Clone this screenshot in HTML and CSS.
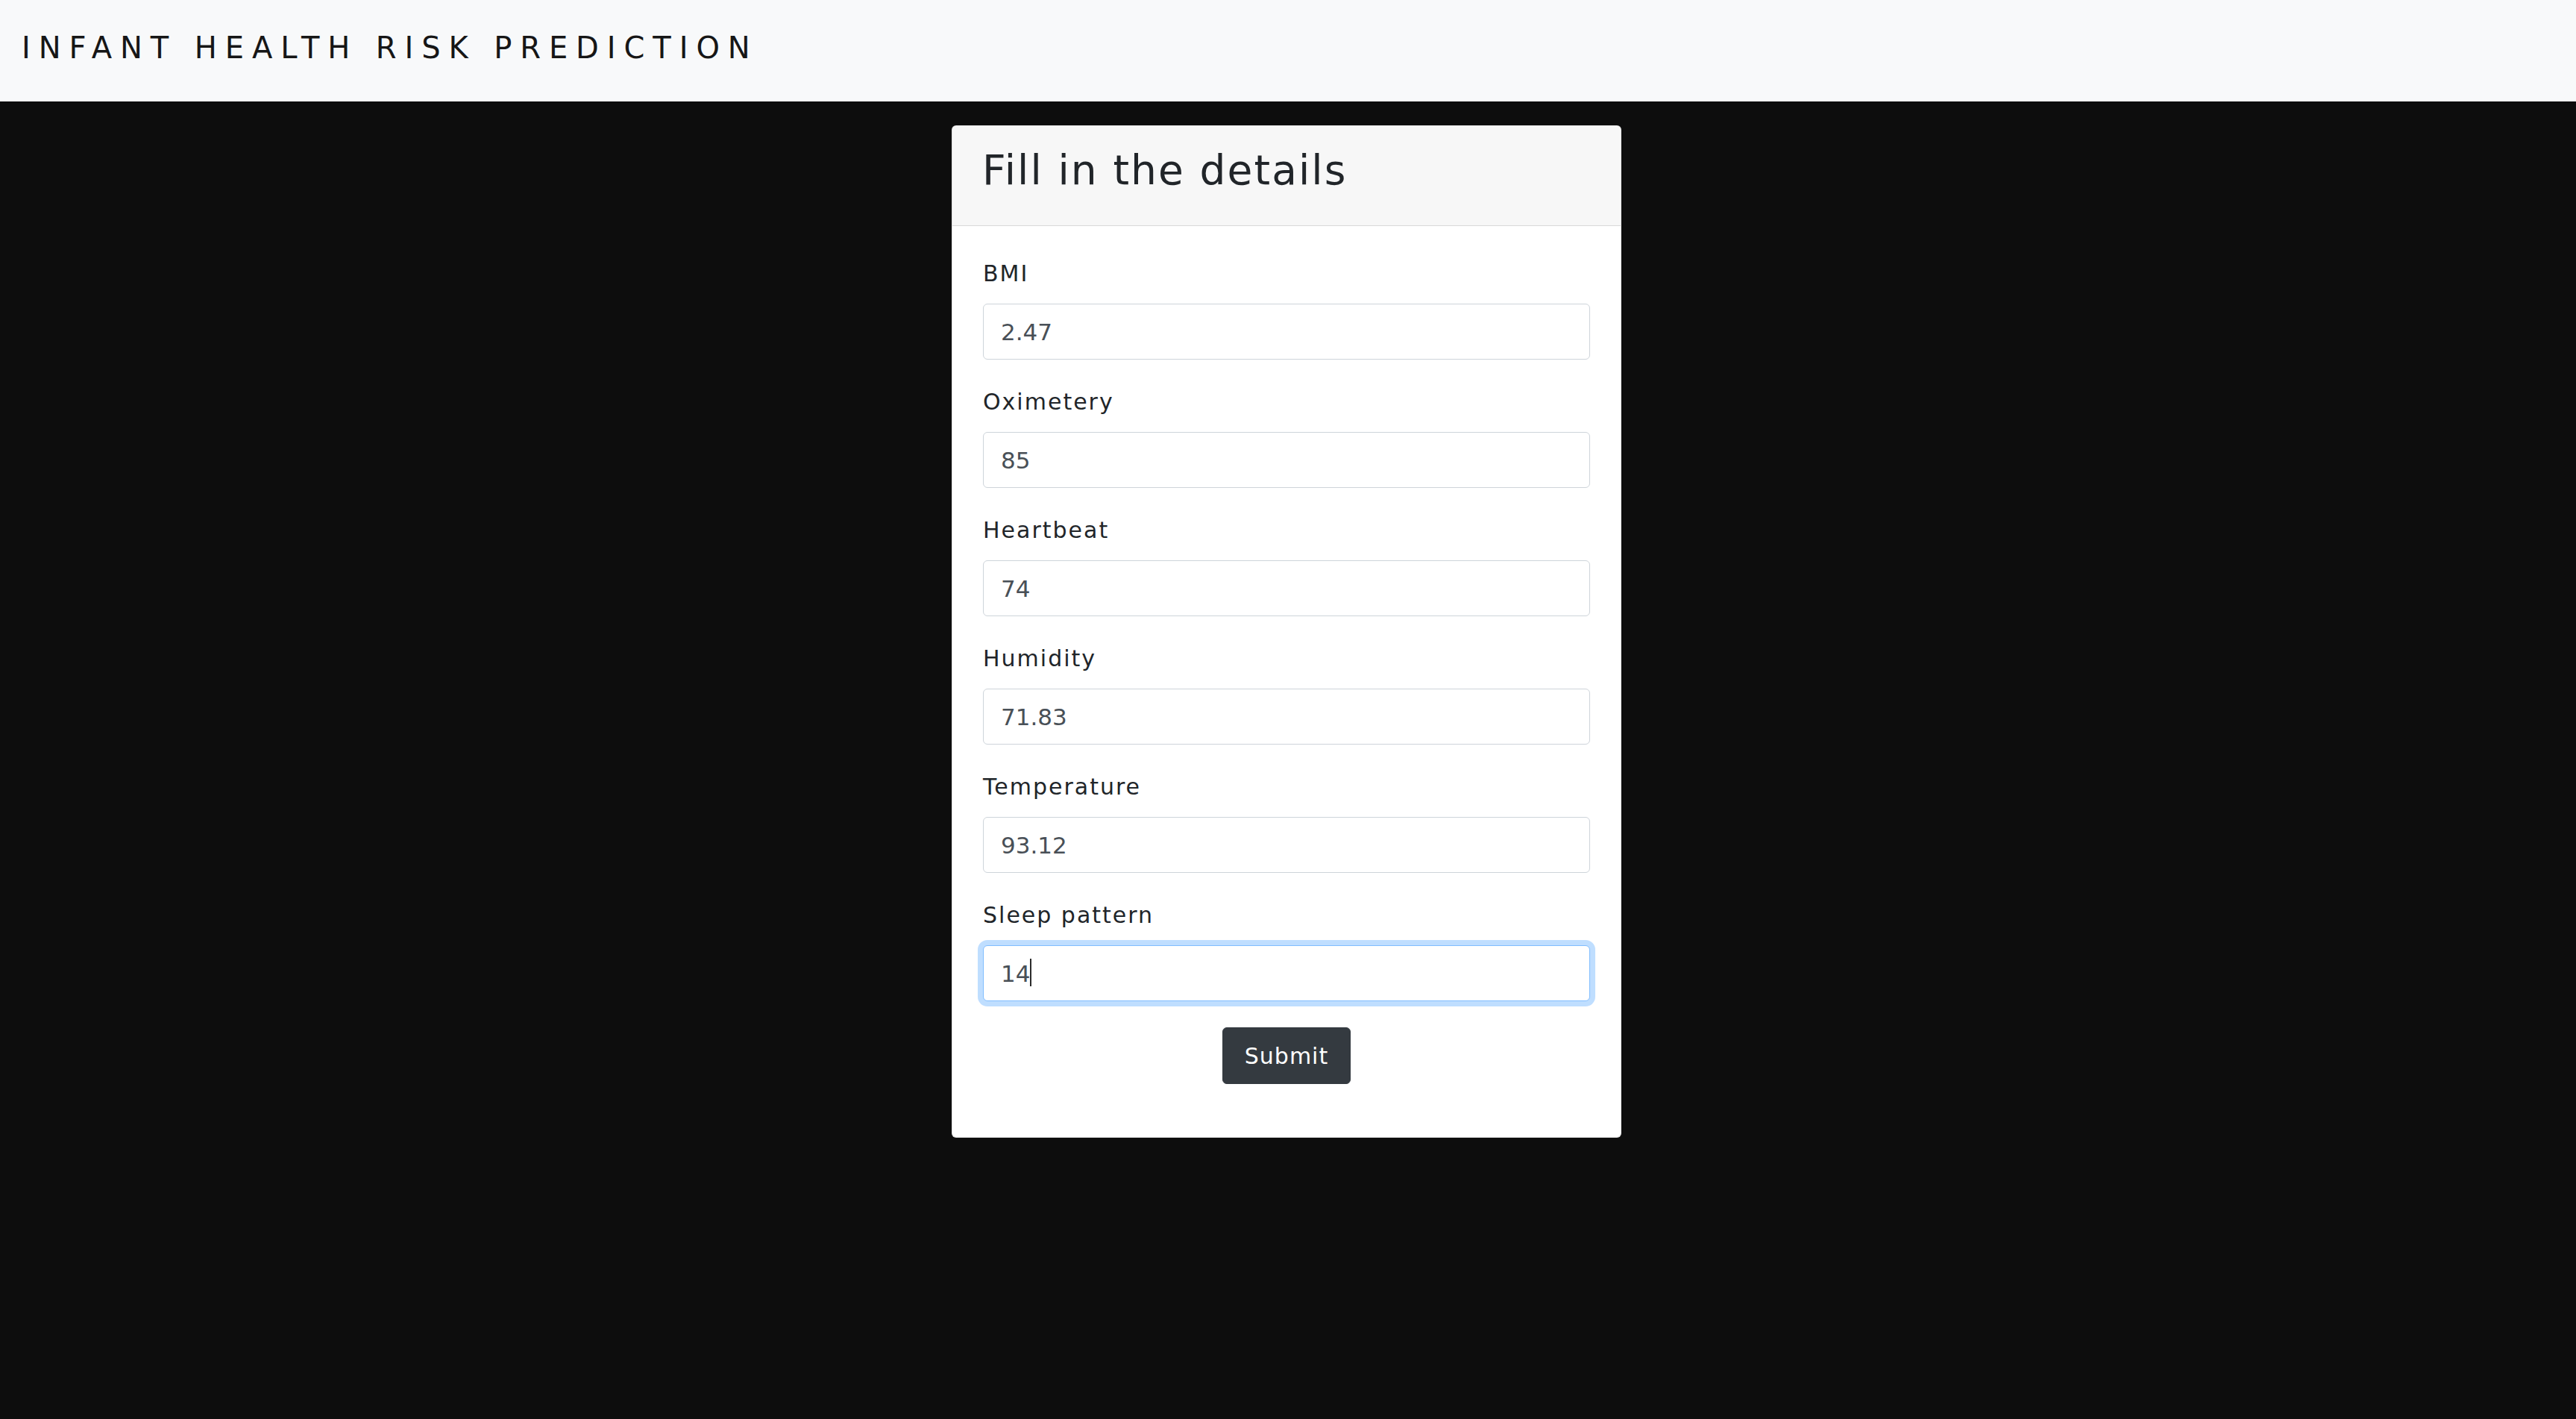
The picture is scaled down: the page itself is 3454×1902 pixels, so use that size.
FILE: index.html
```html
<!DOCTYPE html>
<html lang="en">
<head>
<meta charset="utf-8">
<title>Infant Health Risk Prediction</title>
<link rel="stylesheet" href="styles.css">
</head>
<body>
<header class="navbar">
  <span class="brand">INFANT HEALTH RISK PREDICTION</span>
</header>
<main class="page">
  <section class="card">
    <div class="card-header">
      <h2 class="card-title">Fill in the details</h2>
    </div>
    <form class="card-body">
      <div class="field">
        <label class="field-label" for="bmi">BMI</label>
        <input class="field-input" id="bmi" type="text" value="2.47">
      </div>
      <div class="field">
        <label class="field-label" for="oxi">Oximetery</label>
        <input class="field-input" id="oxi" type="text" value="85">
      </div>
      <div class="field">
        <label class="field-label" for="heart">Heartbeat</label>
        <input class="field-input" id="heart" type="text" value="74">
      </div>
      <div class="field">
        <label class="field-label" for="hum">Humidity</label>
        <input class="field-input" id="hum" type="text" value="71.83">
      </div>
      <div class="field">
        <label class="field-label" for="temp">Temperature</label>
        <input class="field-input" id="temp" type="text" value="93.12">
      </div>
      <div class="field">
        <label class="field-label" for="sleep">Sleep pattern</label>
        <div class="input-wrap">
          <input class="field-input is-focused" id="sleep" type="text" value="14">
          <span class="caret"></span>
        </div>
      </div>
      <div class="actions">
        <button class="btn-submit" type="button">Submit</button>
      </div>
    </form>
  </section>
</main>
</body>
</html>
```
FILE: styles.css
```css
* { box-sizing: border-box; }

html, body {
  margin: 0;
  padding: 0;
}

body {
  background: #0d0d0d;
  font-family: "DejaVu Sans", "Open Sans", sans-serif;
  color: #212529;
  min-height: 1902px;
}

.navbar {
  background: #f8f9fa;
  height: 136px;
  padding: 37px 29px 45px;
}

.brand {
  display: block;
  font-size: 40px;
  line-height: 54px;
  letter-spacing: 10.9px;
  color: #161616;
  white-space: nowrap;
}

.page {
  padding: 32px 4px 0 0;
}

.card {
  width: 898px;
  margin: 0 auto;
  background: #fff;
  border: 1px solid rgba(0, 0, 0, 0.125);
  border-radius: 6px;
  overflow: hidden;
}

.card-header {
  background: #f7f7f7;
  border-bottom: 1px solid rgba(0, 0, 0, 0.125);
  padding: 26px 40px 41px;
}

.card-title {
  margin: 0;
  font-weight: normal;
  font-size: 55px;
  line-height: 66px;
  letter-spacing: 2.1px;
  color: #212529;
}

.card-body {
  padding: 42px 41px 71px;
  display: flex;
  flex-direction: column;
}

.field {
  display: flex;
  flex-direction: column;
  margin-bottom: 35px;
}

.field:last-of-type {
  margin-bottom: 30px;
}

.field-label {
  font-size: 30px;
  line-height: 44px;
  letter-spacing: 2px;
  color: #212529;
  margin-bottom: 18px;
}

.input-wrap {
  position: relative;
}

.field-input {
  display: block;
  width: 100%;
  height: 75px;
  padding: 0 23px;
  font-family: "DejaVu Sans", "Open Sans", sans-serif;
  font-size: 31px;
  color: #495057;
  background: #fff;
  border: 1px solid #ced4da;
  border-radius: 6px;
  outline: none;
}

.field-input.is-focused {
  border-color: #80bdff;
  box-shadow: 0 0 0 7px rgba(0, 123, 255, 0.25);
}

.caret {
  position: absolute;
  left: 63px;
  top: 18px;
  width: 2px;
  height: 37px;
  background: #2b2b2b;
}

.actions {
  display: flex;
  justify-content: center;
}

.btn-submit {
  height: 76px;
  padding: 0 29px;
  font-family: "DejaVu Sans", "Open Sans", sans-serif;
  font-size: 30px;
  letter-spacing: 1px;
  color: #fff;
  background: #343a40;
  border: 1px solid #343a40;
  border-radius: 6px;
  cursor: pointer;
}
```
